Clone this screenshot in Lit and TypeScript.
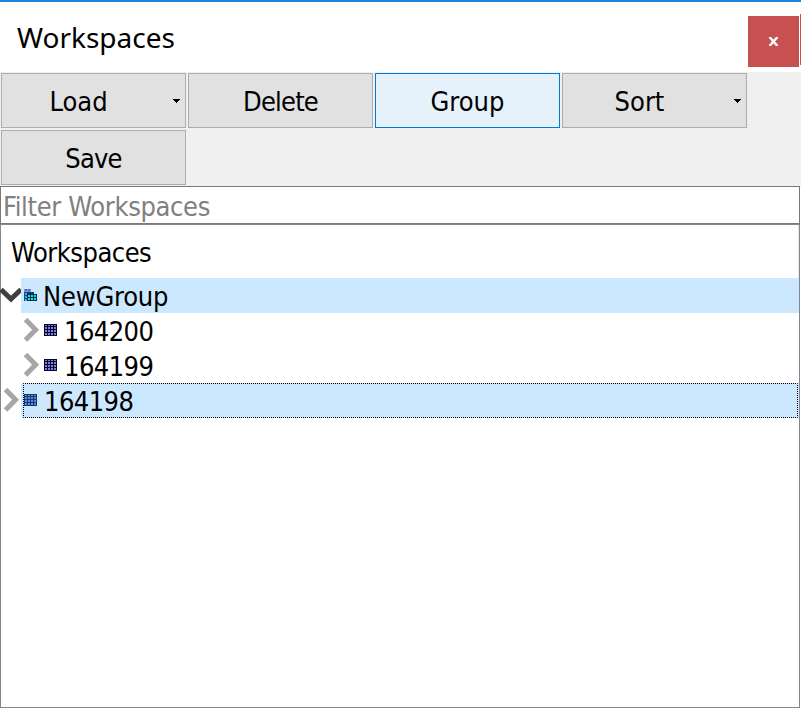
import { LitElement, html, css, svg, nothing } from "lit";
import { customElement } from "lit/decorators.js";
import { classMap } from "lit/directives/class-map.js";

interface Tool { label: string; menu?: boolean; hot?: boolean; tight?: boolean }
interface Row { label: string; depth: number; open?: boolean; group?: boolean; selected?: boolean; focused?: boolean }

const TOOLS: Tool[] = [
  { label: "Load", menu: true },
  { label: "Delete", tight: true },
  { label: "Group", hot: true },
  { label: "Sort", menu: true },
  { label: "Save", tight: true },
];

const ROWS: Row[] = [
  { label: "NewGroup", depth: 0, open: true, group: true, selected: true },
  { label: "164200", depth: 1 },
  { label: "164199", depth: 1 },
  { label: "164198", depth: 0, selected: true, focused: true },
];

const cells = (x0: number, y0: number, cols: number, rows: number, fill: string) =>
  Array.from({ length: cols * rows }, (_, i) =>
    svg`<rect x=${x0 + (i % cols) * 3} y=${y0 + Math.floor(i / cols) * 3} width="2" height="2" fill=${fill}></rect>`);

@customElement("app-root")
export class AppRoot extends LitElement {
  static styles = css`
    :host { display: flex; flex-direction: column; width: 801px; height: 708px; box-sizing: border-box;
      background: #fff; overflow: hidden; color: #000; font: 27px "DejaVu Sans Condensed", "DejaVu Sans", sans-serif; font-stretch: condensed; }
    svg { display: block; flex: none; }
    .title { height: 72px; box-sizing: border-box; border-top: 2px solid #1a82d8; display: flex; padding-left: 17px; }
    .title-text { flex: 1; font: 28px/70px "Noto Sans", "Open Sans", sans-serif; }
    .close { width: 51px; height: 51px; margin-top: 14px; background: #c75050; border: 0; padding: 0; display: grid; place-items: center; }
    .edge { width: 1px; height: 51px; margin: 12px 0 0 1px; background: #c75050; }
    .tools { height: 114px; box-sizing: border-box; background: #f0f0f0; display: flex; flex-wrap: wrap; align-content: flex-start; gap: 2px; padding: 1px 0 0 1px; }
    .tool { width: 185px; height: 55px; box-sizing: border-box; border: 1px solid #adadad; background: #e1e1e1; display: flex; align-items: center; }
    .tool span { flex: 1; text-align: center; line-height: 53px; padding-top: 2px; }
    .tool.menu { padding-right: 5px; }
    .menu span { padding-right: 18px; }
    .tight { letter-spacing: -0.8px; }
    .hot { background: #e5f1fb; border-color: #0078d7; }
    .filter { width: 800px; height: 38px; box-sizing: border-box; border: 1px solid #7a7a7a; color: #808080; line-height: 40px; padding-left: 2px; letter-spacing: -0.35px; }
    .tree { width: 800px; flex: 1; box-sizing: border-box; border: 1px solid #828790; }
    .head { height: 53px; line-height: 56px; padding-left: 10px; border-right: 1px solid #e5e5e5; letter-spacing: -0.5px; box-sizing: border-box; }
    .row { height: 35px; display: flex; }
    .child { padding-left: 20px; }
    .toggle { width: 20px; height: 35px; position: relative; }
    .body { flex: 1; display: flex; align-items: center; padding-left: 3px; box-sizing: border-box; position: relative; }
    .selected .body { background: #cce8ff; }
    .label { line-height: 35px; margin-left: 7px; padding-top: 2px; letter-spacing: -0.55px; }
    .grp { letter-spacing: -0.2px; margin-left: 6px; }
    .ring { position: absolute; left: 2px; top: 0; }
  `;

  private toggle(r: Row) {
    return html`<svg class="toggle" viewBox="0 0 20 35" overflow="visible">
      <path d=${r.open ? "M0 11.5L10 21L20 11.5" : "M4.5 6.5L14.6 16.7L4.5 26.9"} fill="none"
        stroke=${r.open ? "#404040" : "#a6a6a6"} stroke-width="5"></path></svg>`;
  }

  private icon(r: Row) {
    if (r.group) {
      return html`<svg width="13" height="13" shape-rendering="crispEdges">
        <rect x="0" y="0" width="7" height="3" fill="#8098c8"></rect>
        <rect x="1" y="0" width="2" height="2" fill="#5068f8"></rect><rect x="4" y="0" width="2" height="2" fill="#5068f8"></rect>
        <rect x="0" y="3" width="4" height="9" fill="#185078"></rect>${cells(1, 4, 1, 3, "#38a8e8")}
        <rect x="3" y="3" width="7" height="2" fill="#103868"></rect>
        <rect x="3" y="5" width="10" height="7" fill="#003048"></rect>${cells(4, 6, 3, 2, "#20dcf4")}</svg>`;
    }
    const line = r.selected ? "#183860" : "#080820";
    return html`<svg width="13" height="13" shape-rendering="crispEdges">
      <rect x="0" y="0" width="13" height="12" fill=${line}></rect>
      ${cells(1, 0, 4, 4, r.selected ? "#5888f8" : "#7878f8")}
      <rect x="0" y="0" width="13" height="1" fill=${line}></rect></svg>`;
  }

  render() {
    return html`
      <div class="title"><div class="title-text">Workspaces</div>
        <button class="close" aria-label="Close"><svg width="11" height="9" viewBox="0 0 11 9"><path d="M1.5 0L9.5 9M9.5 0L1.5 9" stroke="#fff" stroke-width="2.4"></path></svg></button>
        <div class="edge"></div></div>
      <div class="tools">${TOOLS.map(t => html`
        <div class="tool ${classMap({ hot: !!t.hot, menu: !!t.menu, tight: !!t.tight })}"><span>${t.label}</span>
          ${t.menu ? html`<svg width="7" height="4" shape-rendering="crispEdges"><path d="M0 0H7V1H6V2H5V3H4V4H3V3H2V2H1V1H0Z"></path></svg>` : nothing}</div>`)}</div>
      <div class="filter">Filter Workspaces</div>
      <div class="tree"><div class="head">Workspaces</div>
        ${ROWS.map(r => html`<div class="row ${classMap({ child: r.depth > 0, selected: !!r.selected })}">
          <div class="body-toggle">${this.toggle(r)}</div><div class="body">${this.icon(r)}<span class="label ${classMap({ grp: !!r.group })}">${r.label}</span>
          ${r.focused ? html`<svg class="ring" width="775" height="35"><rect x="0.5" y="0.5" width="774" height="34" fill="none" stroke="#000" stroke-dasharray="1 1" stroke-dashoffset="0.5"></rect></svg>` : nothing}
          </div></div>`)}
      </div>`;
  }
}
